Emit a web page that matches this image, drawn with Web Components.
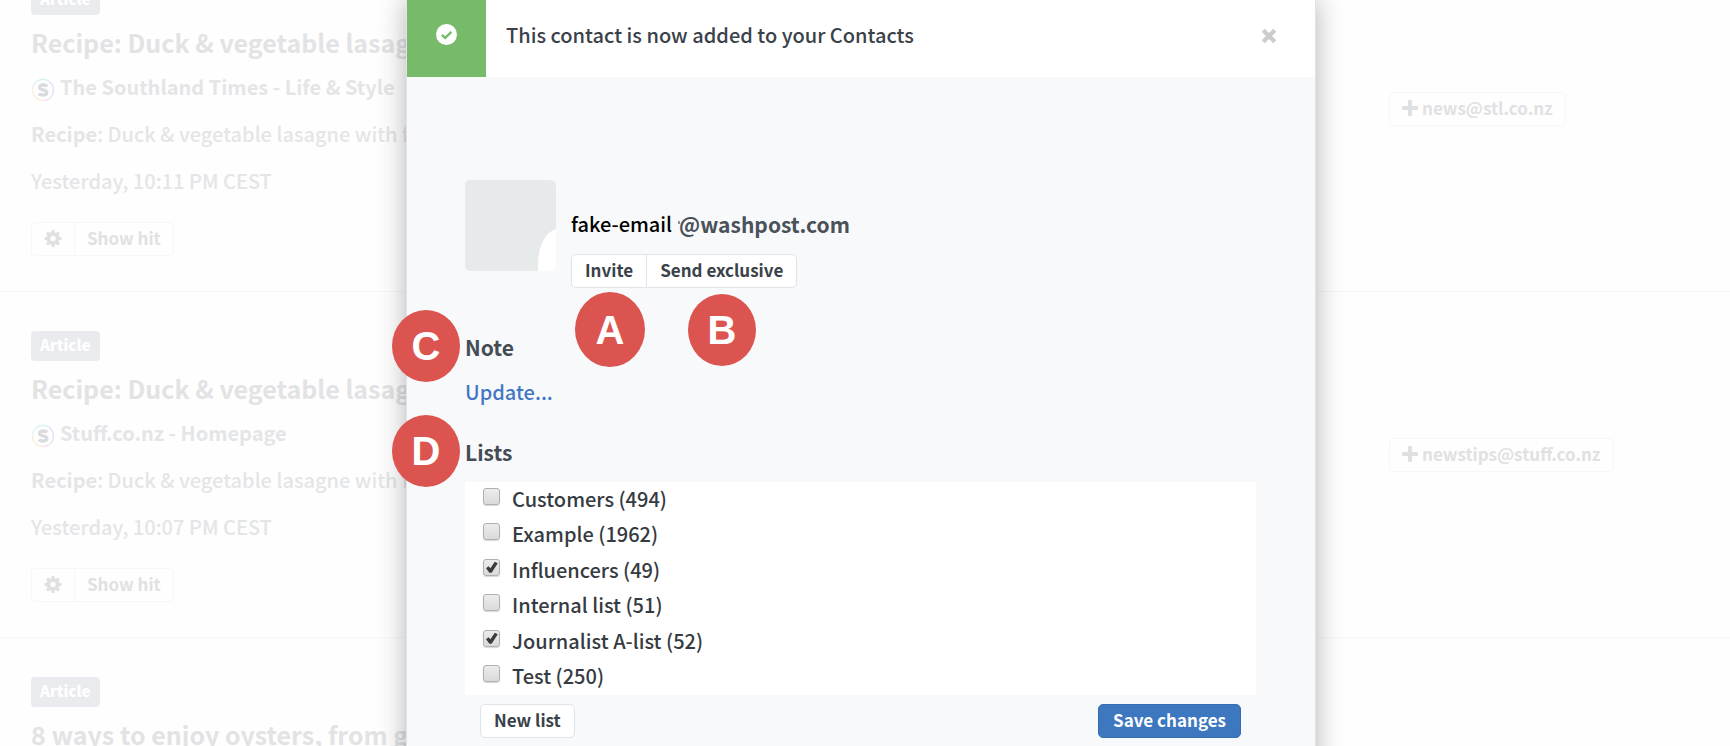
<!DOCTYPE html>
<html lang="en">
<head>
<meta charset="utf-8">
<title>Contacts</title>
<style>
  html, body { margin: 0; height: 100%; overflow: hidden; background: #fefefe; }
  body { font: 500 20px/30px "Noto Sans CJK SC", "Open Sans", sans-serif; color: #3a4149; }
</style>
</head>
<body>
<contacts-page></contacts-page>
<script>
const define = (name, html, setup) => {
  const tpl = document.createElement('template');
  tpl.innerHTML = html;
  customElements.define(name, class extends HTMLElement {
    constructor() {
      super();
      this.attachShadow({ mode: 'open' }).append(tpl.content.cloneNode(true));
    }
    connectedCallback() { if (setup) setup(this, this.shadowRoot); }
  });
};

/* Button; grouped buttons share a border through the "place" attribute */
define('ui-button', `
<style>
  :host { display: inline-block; }
  button { display: flex; align-items: center; gap: 4px; box-sizing: border-box; height: 34px; margin: 0;
    padding: 0 13px 2px; border: 1px solid #dfe3ea; border-radius: 5px; background: #fff;
    color: #3a4149; font: inherit; font-size: 17px; font-weight: 700; line-height: 30px; white-space: nowrap; }
  :host([place=first]) button { border-radius: 5px 0 0 5px; border-right: 0; }
  :host([place=last]) button { border-radius: 0 5px 5px 0; }
  :host([kind=primary]) button { background: #3c77bf; border-color: #366cb0; color: #fff; padding: 0 14px 2px; }
  :host([kind=faded]) button { background: #fefefe; border-color: #f7f7f8; color: #e0e1e3; padding: 0 12px 2px; }
</style>
<button type="button"><slot></slot></button>`,
(host, root) => {
  const label = host.getAttribute('label');
  if (label) root.querySelector('button').setAttribute('aria-label', label);
});

/* Lettered red marker */
define('step-marker', `
<style>
  :host { position: absolute; display: flex; align-items: center; justify-content: center;
    width: 68px; height: 72px; border-radius: 50%; background: #dc544f; color: #fff;
    font: 700 40px/40px "Liberation Sans", sans-serif; }
</style>
<slot></slot>`);

/* One search hit in the feed */
define('feed-item', `
<style>
  :host { display: grid; grid-template-columns: minmax(0, 1fr) 341px; box-sizing: border-box;
    min-height: 346px; padding: 39px 0 35px 31px; border-bottom: 1px solid #f7f7f8; color: #e4e5e7; }
  article { display: flex; flex-direction: column; align-items: flex-start; white-space: nowrap; }
  .badge { padding: 0 10px 3px 9px; line-height: 27px; border-radius: 4px; background: #eaebef; color: #fff;
    font-size: 15px; font-weight: 900; }
  h2 { margin: 12px 0 0; font-size: 25px; line-height: 30px; font-weight: 700; color: #e2e3e5; }
  .source { display: flex; align-items: center; gap: 5px; margin-top: 15px; font-weight: 700; }
  .source svg { margin-top: 6px; }
  p { margin: 17px 0 0; }
  .tools { display: flex; margin-top: 26px; }
  .contact { padding-top: 107px; }
  svg { display: block; }
</style>
<article>
  <span class="badge">Article</span>
  <h2><slot name="title"></slot></h2>
  <div class="source">
    <svg width="24" height="24" viewBox="0 0 24 24" aria-hidden="true" fill="none" stroke-width="1.500">
      <path d="M1.500 12A10.500 10.500 0 0 1 6 3.400" stroke="#e4f3f8"/>
      <path d="M6 3.400A10.500 10.500 0 0 1 18 3.400" stroke="#d8f2f8"/>
      <path d="M18 3.400A10.500 10.500 0 0 1 21 17.500" stroke="#e2e2fa"/>
      <path d="M21 17.500A10.500 10.500 0 0 1 12 22.500" stroke="#f6e4f4"/>
      <path d="M12 22.500A10.500 10.500 0 0 1 1.500 12" stroke="#fdeedd"/>
      <path d="M16 8.400C14.500 6.400 8.600 6.400 8.600 9.400C8.600 12.600 15.800 11 15.800 14.600C15.800 17.800 9.600 17.600 8 15.400" stroke="#dadbdd" stroke-width="3.400"/>
    </svg>
    <slot name="source"></slot>
  </div>
  <p><slot name="snippet"></slot></p>
  <p><slot name="date"></slot></p>
  <div class="tools">
    <ui-button kind="faded" place="first" label="Settings"><svg width="18" height="17" viewBox="0 0 17 17"><g fill="#dfe0e2"><path fill-rule="evenodd" d="M8.500 2.300a6.200 6.200 0 1 0 0 12.400a6.200 6.200 0 0 0 0-12.400zM8.500 5.800a2.700 2.700 0 1 1 0 5.400a2.700 2.700 0 0 1 0-5.400z"/><path d="M6.600 3L7.200 0h2.600l.6 3zM6.600 14L7.200 17h2.600l.6-3zM3 6.600L0 7.200v2.600l3 .6zM14 6.600L17 7.200v2.600l-3 .6z"/><path transform="rotate(45 8.500 8.500)" d="M6.600 3L7.200 0h2.600l.6 3zM6.600 14L7.200 17h2.600l.6-3zM3 6.600L0 7.200v2.600l3 .6zM14 6.600L17 7.200v2.600l-3 .6z"/></g></svg></ui-button>
    <ui-button kind="faded" place="last">Show hit</ui-button>
  </div>
</article>
<div class="contact">
  <ui-button kind="faded"><svg width="16" height="16" viewBox="0 0 16 16" aria-hidden="true"><path fill="#dfe0e2" d="M6 1q0-1 1-1h2q1 0 1 1v5h5q1 0 1 1v2q0 1-1 1h-5v5q0 1-1 1H7q-1 0-1-1v-5H1q-1 0-1-1V7q0-1 1-1h5z"/></svg><slot name="email"></slot></ui-button>
</div>`);

/* Success notice at the top of the dialog */
define('notice-bar', `
<style>
  :host { display: flex; align-items: center; height: 85px; background: #fff; }
  .state { display: grid; place-items: center; align-self: stretch; width: 79px; background: #76ba6a; }
  p { flex: 1; margin: 0; padding-left: 20px; }
  button { display: grid; place-items: center; width: 36px; height: 36px; margin: 2px 28px 0 0; padding: 0; border: 0; background: none; }
</style>
<div class="state"><svg width="21" height="21" viewBox="0 0 21 21" aria-hidden="true"><circle cx="10.500" cy="10.500" r="10.500" fill="#fff"/><path d="M5.800 10.800L9.200 13.900L15.400 7.900" fill="none" stroke="#76ba6a" stroke-width="2.300"/></svg></div>
<p><slot></slot></p>
<button type="button" aria-label="Close"><svg width="16" height="16" viewBox="0 0 16 16"><path d="M2.200 2.200L13.800 13.800M13.800 2.200L2.200 13.800" stroke="#ccc" stroke-width="4.400"/></svg></button>`);

/* Tick box with its label */
define('list-option', `
<style>
  :host { display: block; }
  label { display: flex; align-items: center; gap: 12px; line-height: 31px; color: #363b41; }
  input { appearance: none; box-sizing: border-box; flex: none; width: 17px; height: 17px; margin: 0 0 4px;
    border: 1px solid #b0b0b0; border-radius: 3px; background: linear-gradient(#ececec, #dadada);
    box-shadow: 0 1px 1px #d8d8d8; }
  .box { position: relative; display: grid; }
  svg { display: none; position: absolute; pointer-events: none; }
  input:checked + svg { display: block; top: 1px; left: 2px; }
</style>
<label><span class="box"><input type="checkbox"><svg width="14" height="14" viewBox="0 0 14 14" aria-hidden="true"><path d="M1 8.200L3.500 6.200L5.400 8.200L9.800 1.800L12.800 3.200L6.600 12.800H4.400z" fill="#3c3c3c"/></svg></span><slot></slot></label>`,
(host, root) => { root.querySelector('input').checked = host.hasAttribute('checked'); });

define('contact-dialog', `
<style>
  :host { display: block; box-sizing: border-box; width: 100%; max-width: 910px; min-height: 100%;
    border: solid #dfe3ea; border-width: 0 1px; background: #f8f9fb; box-shadow: 0 0 26px rgba(0,0,0,.3); }
  notice-bar { margin-top: -8px; }
  .content { padding: 103px 59px 40px 58px; }
  .contact { display: flex; gap: 15px; }
  .avatar { display: block; flex: none; }
  .info { padding-top: 29px; }
  .name { display: flex; gap: 7px; margin: 0 0 15px; font-size: 20px; }
  .name .user { color: #000; font-weight: 500; }
  .name .domain { position: relative; font-size: 21px; font-weight: 700; color: #4a5159; }
  .name .domain::before { content: ""; position: absolute; left: -1px; top: 12px; width: 2px; height: 3px; background: #8f949a; }
  .actions { position: relative; display: flex; }
  .actions .a { left: 4px; top: 38px; width: 70px; height: 75px; }
  .actions .b { left: 117px; top: 40px; }
  h3 { position: relative; margin: 44px 0 15px; font-size: 21px; line-height: 30px; font-weight: 700; color: #454c54; }
  h3.lists { margin-top: 30px; margin-bottom: 15px; }
  h3 step-marker { left: -73px; top: -22px; }
  .link { display: block; width: max-content; color: #4377c4; text-decoration: none; }
  .options { display: flex; flex-direction: column; justify-content: space-between; box-sizing: border-box;
    min-height: 213px; padding: 1px 18px 4px; background: #fff; }
  .footer { display: flex; justify-content: space-between; margin-top: 9px; padding: 0 15px; }
</style>
<notice-bar>This contact is now added to your Contacts</notice-bar>
<div class="content">
  <div class="contact">
    <svg class="avatar" width="91" height="91" viewBox="0 0 91 91" role="img" aria-label="Contact picture"><rect width="91" height="91" rx="5" fill="#e7eaeb"/><path d="M73 91C72 68 79 53 91 49V86Q91 91 86 91z" fill="#fff"/></svg>
    <div class="info">
      <p class="name"><span class="user">fake-email</span><span class="domain">@washpost.com</span></p>
      <div class="actions">
        <ui-button place="first">Invite</ui-button><ui-button place="last">Send exclusive</ui-button>
        <step-marker class="a">A</step-marker><step-marker class="b">B</step-marker>
      </div>
    </div>
  </div>
  <h3>Note<step-marker>C</step-marker></h3>
  <a class="link" href="#note">Update...</a>
  <h3 class="lists">Lists<step-marker>D</step-marker></h3>
  <div class="options">
    <list-option>Customers (494)</list-option>
    <list-option>Example (1962)</list-option>
    <list-option checked>Influencers (49)</list-option>
    <list-option>Internal list (51)</list-option>
    <list-option checked>Journalist A-list (52)</list-option>
    <list-option>Test (250)</list-option>
  </div>
  <div class="footer">
    <ui-button>New list</ui-button>
    <ui-button kind="primary">Save changes</ui-button>
  </div>
</div>`);

define('contacts-page', `
<style>
  :host { position: relative; display: block; height: 100vh; overflow: hidden; }
  /* the feed is scrolled a little under the dialog */
  main { margin-top: -54px; }
  .overlay { position: absolute; inset: 0; display: flex; justify-content: center; align-items: flex-start; padding-right: 8px; }
  b { font-weight: 700; }
</style>
<main>
  <feed-item>
    <span slot="title">Recipe: Duck &amp; vegetable lasagne</span>
    <span slot="source">The Southland Times - Life &amp; Style</span>
    <span slot="snippet"><b>Recipe</b>: Duck &amp; vegetable lasagne with f</span>
    <span slot="date">Yesterday, 10:11 PM CEST</span>
    <span slot="email">news@stl.co.nz</span>
  </feed-item>
  <feed-item>
    <span slot="title">Recipe: Duck &amp; vegetable lasagne</span>
    <span slot="source">Stuff.co.nz - Homepage</span>
    <span slot="snippet"><b>Recipe</b>: Duck &amp; vegetable lasagne with f</span>
    <span slot="date">Yesterday, 10:07 PM CEST</span>
    <span slot="email">newstips@stuff.co.nz</span>
  </feed-item>
  <feed-item>
    <span slot="title">8 ways to enjoy oysters, from g</span>
  </feed-item>
</main>
<div class="overlay"><contact-dialog></contact-dialog></div>`);
</script>
</body>
</html>
